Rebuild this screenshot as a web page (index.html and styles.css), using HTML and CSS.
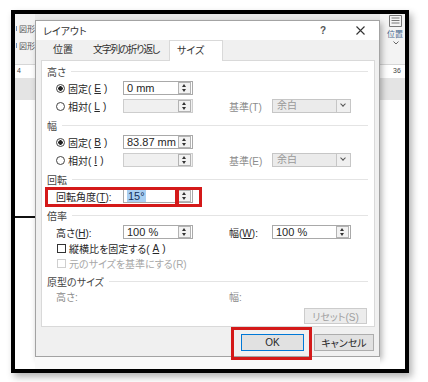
FILE: index.html
```html
<!DOCTYPE html>
<html lang="ja">
<head>
    <meta charset="UTF-8">
    <meta name="viewport" content="width=device-width, initial-scale=1.0">
    <title>レイアウト</title>
    <link rel="stylesheet" href="styles.css">
</head>
<body>
    <div class="shot">
        <div class="frame">
            <!-- 左側の Word 画面 -->
            <div class="side side-left">
                <div class="ribbon">
                    <div class="rb-line"><span class="dot"></span>図形</div>
                    <div class="rb-line"><span class="dot"></span>図形</div>
                </div>
                <div class="ruler">4</div>
                <div class="gray-band"></div>
                <div class="doc"><div class="shape-line"></div></div>
            </div>

            <div class="center">
                <div class="topstrip"></div>
                <div class="dialog">
                    <div class="titlebar">
                        <span>レイアウト</span>
                        <span class="help">?</span>
                        <svg class="close" width="9" height="9" viewBox="0 0 9 9"><path d="M0.5 0.5L8.5 8.5M8.5 0.5L0.5 8.5" stroke="#333" stroke-width="1.1"/></svg>
                    </div>
                    <div class="tabs">
                        <div class="tab tab-pos">位置</div>
                        <div class="tab tab-wrap">文字列の折り返し</div>
                        <div class="tab active">サイズ</div>
                    </div>

                    <div class="panel">
                        <div class="sec-head">高さ</div>
                        <div class="row">
                            <label class="opt"><span class="radio on"></span>固定(<u>E</u>)</label>
                            <div class="spin-input"><span class="val">0 mm</span><span class="spin"></span></div>
                        </div>
                        <div class="row">
                            <label class="opt"><span class="radio"></span>相対(<u>L</u>)</label>
                            <div class="spin-input off"><span class="val"></span><span class="spin"></span></div>
                            <span></span>
                            <span class="dim">基準(T)</span>
                            <div class="select"><span class="sel-val">余白</span><span class="sel-btn"></span></div>
                        </div>

                        <div class="sec-head">幅</div>
                        <div class="row">
                            <label class="opt"><span class="radio on"></span>固定(<u>B</u>)</label>
                            <div class="spin-input"><span class="val">83.87 mm</span><span class="spin"></span></div>
                        </div>
                        <div class="row">
                            <label class="opt"><span class="radio"></span>相対(<u>I</u>)</label>
                            <div class="spin-input off"><span class="val"></span><span class="spin"></span></div>
                            <span></span>
                            <span class="dim">基準(E)</span>
                            <div class="select"><span class="sel-val">余白</span><span class="sel-btn"></span></div>
                        </div>

                        <div class="sec-head">回転</div>
                        <div class="row rot-row">
                            <span class="lbl">回転角度(<u>T</u>):</span>
                            <div class="spin-input"><span class="val"><span class="sel-text">15°</span></span><span class="spin"></span></div>
                            <span class="mark mark-a"></span>
                            <span class="mark mark-b"></span>
                        </div>

                        <div class="sec-head">倍率</div>
                        <div class="row">
                            <span class="lbl">高さ(<u>H</u>):</span>
                            <div class="spin-input"><span class="val">100 %</span><span class="spin"></span></div>
                            <span></span>
                            <span class="lbl">幅(<u>W</u>):</span>
                            <div class="spin-input"><span class="val">100 %</span><span class="spin"></span></div>
                        </div>
                        <label class="chk-row"><span class="box"></span>縦横比を固定する(<u>A</u>)</label>
                        <label class="chk-row off"><span class="box"></span>元のサイズを基準にする(R)</label>

                        <div class="sec-head">原型のサイズ</div>
                        <div class="row orig-row">
                            <span class="dim">高さ:</span>
                            <span></span>
                            <span></span>
                            <span class="dim">幅:</span>
                        </div>
                        <button class="btn reset">リセット(S)</button>
                    </div>

                    <div class="buttons">
                        <button class="btn ok">OK</button>
                        <button class="btn">キャンセル</button>
                    </div>
                </div>
                <div class="bottomstrip"></div>
            </div>

            <!-- 右側の Word 画面 -->
            <div class="side side-right">
                <div class="ribbon">
                    <svg class="doc-icon" width="13" height="12" viewBox="0 0 13 12"><path d="M0.5 0.5H12.5V11.5H0.5Z M2.5 3H10.5 M2.5 5.5H10.5 M2.5 8H10.5" fill="none" stroke="#777" stroke-width="1"/></svg>
                    <div class="rb-label">位置</div>
                    <svg class="chev" width="6" height="4" viewBox="0 0 6 4"><path d="M0.5 0.5L3 3L5.5 0.5" fill="none" stroke="#666" stroke-width="1"/></svg>
                </div>
                <div class="ruler ruler-r">36</div>
                <div class="gray-band"></div>
                <div class="doc"></div>
            </div>
        </div>
    </div>
</body>
</html>
```

FILE: styles.css
```css
body {
    margin: 0;
    background: #fff;
    font-family: "Liberation Sans", "Noto Sans CJK JP", sans-serif;
    font-size: 10px;
    color: #262626;
    font-feature-settings: "palt";
}
u {
    text-underline-offset: 1px;
}
.shot {
    width: 428px;
    height: 382px;
    padding: 10px 0 0 11px;
    box-sizing: border-box;
}
.frame {
    width: 398px;
    height: 363px;
    border: 4px solid #000;
    box-sizing: border-box;
    display: flex;
    box-shadow: 3px 4px 7px rgba(0, 0, 0, 0.3);
    overflow: hidden;
}

/* Word 画面の左右 */
.side {
    display: flex;
    flex-direction: column;
    overflow: hidden;
}
.side-left {
    width: 20px;
}
.side-right {
    width: 25px;
}
.ribbon {
    height: 50px;
    background: #f3f3f3;
    box-sizing: border-box;
}
.side-left .ribbon {
    padding-top: 6px;
}
.rb-line {
    display: flex;
    align-items: center;
    height: 17px;
    font-size: 8px;
    color: #555;
    white-space: nowrap;
}
.dot {
    width: 3px;
    height: 5px;
    margin: 0 2px 0 1px;
    background: #6d8fb8;
}
.side-right .ribbon {
    display: flex;
    flex-direction: column;
    align-items: flex-start;
    padding: 1px 0 0 9px;
}
.rb-label {
    margin: 1px 0 0 -2px;
    font-size: 8px;
    color: #4a6a90;
    white-space: nowrap;
}
.chev {
    margin: 2px 0 0 4px;
}
.ruler {
    height: 14px;
    background: #fff;
    border-top: 1px solid #d6d6d6;
    box-sizing: border-box;
    font-size: 7px;
    line-height: 12px;
    padding-left: 2px;
    color: #444;
}
.ruler-r {
    padding-left: 13px;
}
.gray-band {
    height: 22px;
    background: #e4e4e4;
}
.doc {
    flex: 1;
    background: #fff;
}
.shape-line {
    margin-top: 116px;
    height: 2px;
    background: #111;
}

/* ダイアログ */
.center {
    width: 345px;
    display: flex;
    flex-direction: column;
    position: relative;
    z-index: 1;
}
.topstrip {
    height: 6px;
    background: #e9e9e9;
}
.bottomstrip {
    flex: 1;
    background: #fafafa;
}
.dialog {
    height: 337px;
    box-sizing: border-box;
    border: 1px solid #a3a3a3;
    background: #f0f0f0;
    box-shadow: 2px 3px 6px rgba(0, 0, 0, 0.3);
    display: flex;
    flex-direction: column;
}
.titlebar {
    height: 19px;
    background: #fff;
    display: flex;
    align-items: center;
    padding: 0 14px 0 7px;
    color: #333;
}
.help {
    margin-left: auto;
    margin-right: 30px;
    font-size: 10px;
    font-weight: bold;
    color: #555;
}
.tabs {
    height: 20px;
    display: flex;
    padding-left: 5px;
}
.tab {
    height: 20px;
    line-height: 20px;
    color: #333;
    box-sizing: border-box;
    white-space: nowrap;
}
.tab-pos {
    padding: 0 10px 0 12px;
}
.tab-wrap {
    padding: 0 0 0 10px;
    width: 86px;
    letter-spacing: -1.3px;
}
.tab.active {
    background: #fff;
    border: 1px solid #d9d9d9;
    border-bottom: none;
    width: 54px;
    height: 21px;
    margin-bottom: -1px;
    padding-left: 7px;
    line-height: 19px;
    position: relative;
    z-index: 2;
}
.panel {
    margin: 0 4px 0 5px;
    height: 267px;
    box-sizing: border-box;
    background: #fff;
    border: 1px solid #d9d9d9;
    padding: 2px 6px 0 5px;
    display: flex;
    flex-direction: column;
}
.sec-head {
    height: 16px;
    display: flex;
    align-items: center;
    color: #444;
    flex-shrink: 0;
}
.sec-head::after {
    content: "";
    flex: 1;
    height: 1px;
    margin-left: 5px;
    background: #e4e4e4;
}
.row {
    height: 18px;
    display: grid;
    grid-template-columns: 67px 70px 36px 43px 79px;
    align-items: center;
    padding-left: 9px;
    flex-shrink: 0;
}
.row + .sec-head,
.chk-row + .sec-head {
    margin-top: 2px;
}
.opt {
    display: flex;
    align-items: center;
    gap: 3px;
}
.radio {
    width: 9px;
    height: 9px;
    border: 1px solid #444;
    border-radius: 50%;
    box-sizing: border-box;
    background: #fff;
}
.radio.on {
    background: radial-gradient(circle, #222 0 2px, #fff 2.5px);
}
.spin-input {
    height: 14px;
    border: 1px solid #a9a9a9;
    box-sizing: border-box;
    background: #fff;
    display: flex;
    align-items: center;
}
.spin-input.off {
    background: #f0f0f0;
    border-color: #cdcdcd;
}
.val {
    flex: 1;
    padding-left: 3px;
    font-size: 11px;
    line-height: 12px;
    white-space: nowrap;
}
.spin {
    width: 11px;
    height: 10px;
    margin-right: 1px;
    border: 1px solid #b3b3b3;
    background: #f2f2f2;
    position: relative;
}
.spin::before,
.spin::after {
    content: "";
    position: absolute;
    left: 3px;
    border-left: 2.5px solid transparent;
    border-right: 2.5px solid transparent;
}
.spin::before {
    top: 1px;
    border-bottom: 3px solid #333;
}
.spin::after {
    bottom: 1px;
    border-top: 3px solid #333;
}
.dim {
    color: #8c8c8c;
}
.select {
    height: 14px;
    border: 1px solid #c6c6c6;
    box-sizing: border-box;
    background: #ebebeb;
    display: flex;
}
.sel-val {
    flex: 1;
    padding-left: 4px;
    line-height: 12px;
    color: #999;
}
.sel-btn {
    width: 13px;
    border-left: 1px solid #c6c6c6;
    background: #f0f0f0;
    position: relative;
}
.sel-btn::after {
    content: "";
    position: absolute;
    left: 4px;
    top: 2px;
    width: 3px;
    height: 3px;
    border-right: 1px solid #555;
    border-bottom: 1px solid #555;
    transform: rotate(45deg);
}
.rot-row {
    position: relative;
}
.sel-text {
    background: #a9cff2;
    color: #15305a;
    padding: 0 1px;
}
.mark {
    position: absolute;
    top: 0;
    height: 20px;
    border: 3px solid #d41919;
    box-sizing: border-box;
}
.mark-a {
    left: -2px;
    width: 134px;
}
.mark-b {
    left: 128px;
    width: 27px;
}
.chk-row {
    height: 15px;
    display: flex;
    align-items: center;
    gap: 3px;
    padding-left: 10px;
    flex-shrink: 0;
}
.box {
    width: 9px;
    height: 9px;
    border: 1px solid #333;
    box-sizing: border-box;
    background: #fff;
}
.chk-row.off {
    color: #a8a8a8;
}
.chk-row.off .box {
    border-color: #cfcfcf;
}
.orig-row {
    height: 15px;
}
.btn {
    font-family: "Liberation Sans", "Noto Sans CJK JP", sans-serif;
    font-size: 10px;
    font-feature-settings: "palt";
    height: 17px;
    width: 60px;
    padding: 0;
    border: 1px solid #adadad;
    background: #e1e1e1;
    color: #262626;
}
.reset {
    align-self: flex-end;
    margin: 4px 1px 0 0;
    width: 63px;
    height: 16px;
    border-color: #cccccc;
    background: #ececec;
    color: #a0a0a0;
}
.buttons {
    display: flex;
    justify-content: flex-end;
    gap: 10px;
    margin-top: 7px;
    padding-right: 5px;
}
.ok {
    width: 63px;
    border-color: #0078d7;
    position: relative;
}
.ok::after {
    content: "";
    position: absolute;
    left: -11px;
    top: -8px;
    width: 81px;
    height: 33px;
    border: 3px solid #d41919;
    box-sizing: border-box;
}
```
